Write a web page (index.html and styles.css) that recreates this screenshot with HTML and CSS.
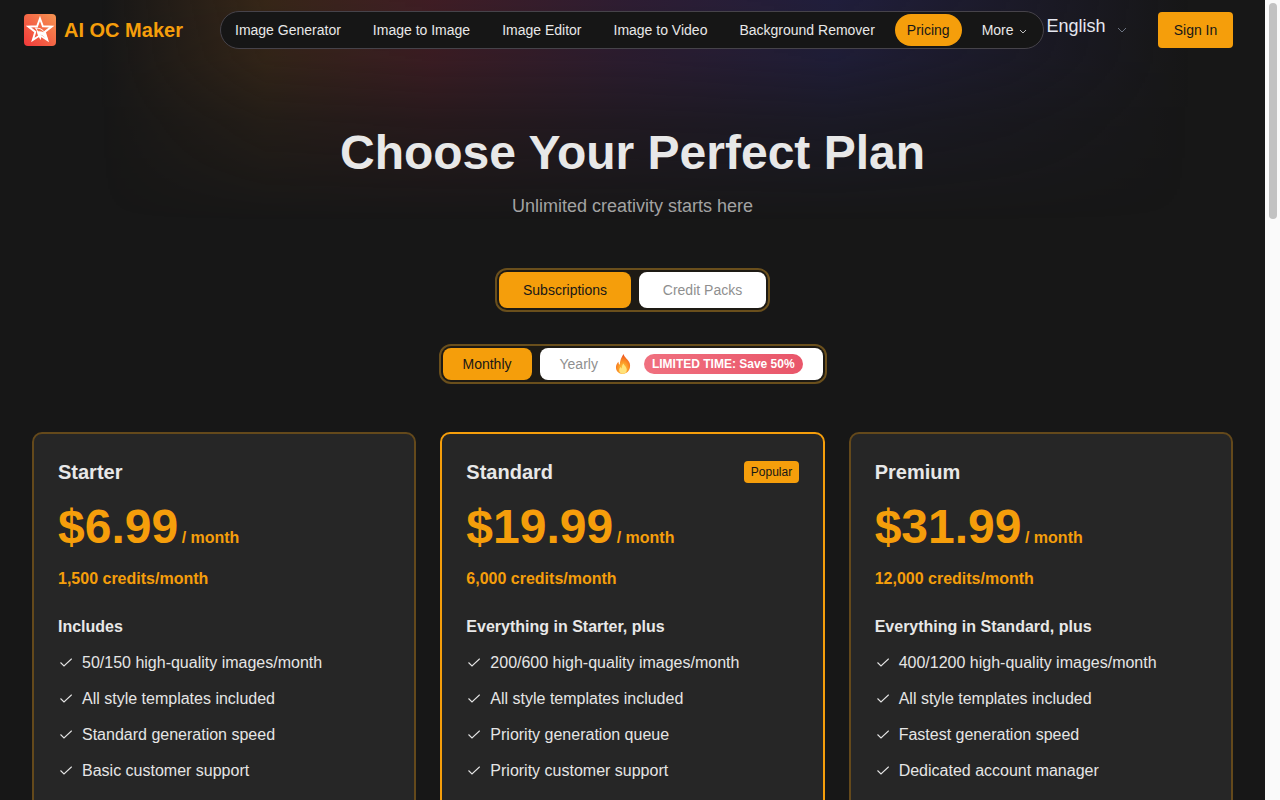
FILE: index.html
```html
<!DOCTYPE html>
<html lang="en">
<head>
<meta charset="utf-8">
<title>AI OC Maker - Pricing</title>
<link rel="stylesheet" href="styles.css">
</head>
<body>
<div class="scrollbar"><div class="scroll-thumb"></div></div>
<div class="glow"></div>
<header class="header">
  <a class="brand" href="#">
    <svg class="logo" viewBox="0 0 32 32" aria-hidden="true">
      <defs>
        <linearGradient id="lg" x1="0" y1="1" x2="1" y2="0"><stop offset="0" stop-color="#f2383a"/><stop offset="1" stop-color="#f59552"/></linearGradient>
        <radialGradient id="fg" cx=".5" cy=".75" r=".8"><stop offset="0" stop-color="#ffd23f"/><stop offset=".5" stop-color="#fb8f24"/><stop offset="1" stop-color="#e8401f"/></radialGradient>
      </defs>
      <rect width="32" height="32" rx="4" fill="url(#lg)"/>
      <path d="M16 4.500l2.900 7.800 8.800.3-6.900 5.300 2.500 8.200-7.300-4.800-7.200 4.800 2.500-8.200-6.900-5.300 8.700-.3z" fill="none" stroke="#fff" stroke-width="1.900" stroke-linejoin="miter"/>
      <path d="M10.500 13.500c4.500-.5 9 1.500 11 6l3 7c-3-2.500-5.500-5-8-6 1 2 1 3.500 0 5.500-2-3.500-3.500-6-3.500-8 0-1.500-1-3-2.500-4.500z" fill="#fff"/>
      <path d="M12.500 14.500c3 .2 6 1.500 7.500 3.800-2.500-1-4.500-1.300-6-1z" fill="#f4704a"/>
    </svg>
    <span class="brand-name">AI OC Maker</span>
  </a>
  <nav class="nav">
    <a class="nav-item" href="#">Image Generator</a>
    <a class="nav-item" href="#">Image to Image</a>
    <a class="nav-item" href="#">Image Editor</a>
    <a class="nav-item" href="#">Image to Video</a>
    <a class="nav-item" href="#">Background Remover</a>
    <a class="nav-item active" href="#">Pricing</a>
    <a class="nav-item" href="#">More <svg class="chev-sm" viewBox="0 0 8 5"><path d="M1 1l3 3 3-3" fill="none" stroke="currentColor" stroke-width=".8"/></svg></a>
  </nav>
  <div class="lang"><span>English</span><svg class="chev-lg" viewBox="0 0 10 6"><path d="M1 1l4 4 4-4" fill="none" stroke="#6b7280" stroke-width="1"/></svg></div>
  <button class="signin">Sign In</button>
</header>
<main class="main">
  <h1 class="title">Choose Your Perfect Plan</h1>
  <p class="subtitle">Unlimited creativity starts here</p>
  <div class="switch-row first">
    <div class="switch">
      <button class="tab tab-lg on sub">Subscriptions</button>
      <button class="tab tab-lg packs">Credit Packs</button>
    </div>
  </div>
  <div class="switch-row">
    <div class="switch">
      <button class="tab on monthly">Monthly</button>
      <button class="tab yearly"><span>Yearly</span>
        <svg class="fire" viewBox="0 0 16 20" aria-hidden="true">
          <path d="M8.500 0c.5 3 5 5.500 6.300 9.500 1.200 4.500-1.300 10-6.800 10.500C2.500 20 .2 15.500 1.200 11.500c.4-1.500 1.300-3 2.300-3.800 0 1.500.4 2.500 1.300 3C4.800 7 6.500 3 8.500 0z" fill="url(#fg)"/>
          <path d="M8.500 9.500c.5 2 3.300 3.500 3.300 6.300 0 2.500-1.700 4-3.800 4s-3.800-1.500-3.800-3.600c0-1.500.8-2.500 1.500-3.200.2.700.6 1.200 1.200 1.400C6.800 12.500 7.200 10.800 8.500 9.500z" fill="#ffe27a"/>
        </svg>
        <span class="save">LIMITED TIME: Save 50%</span>
      </button>
    </div>
  </div>
  <section class="plans">
    <article class="plan">
      <div class="plan-head"><h2 class="plan-name">Starter</h2></div>
      <div class="price"><span class="amount">$6.99</span><span class="per">/ month</span></div>
      <div class="credits">1,500 credits/month</div>
      <h3 class="inc">Includes</h3>
      <ul class="features">
        <li><svg class="tick" viewBox="0 0 12 9"><path d="M.5 4.500l3.500 3.500L11.700.7" fill="none" stroke="currentColor" stroke-width="1.100"/></svg>50/150 high-quality images/month</li>
        <li><svg class="tick" viewBox="0 0 12 9"><path d="M.5 4.500l3.500 3.500L11.700.7" fill="none" stroke="currentColor" stroke-width="1.100"/></svg>All style templates included</li>
        <li><svg class="tick" viewBox="0 0 12 9"><path d="M.5 4.500l3.500 3.500L11.700.7" fill="none" stroke="currentColor" stroke-width="1.100"/></svg>Standard generation speed</li>
        <li><svg class="tick" viewBox="0 0 12 9"><path d="M.5 4.500l3.500 3.500L11.700.7" fill="none" stroke="currentColor" stroke-width="1.100"/></svg>Basic customer support</li>
        <li><svg class="tick" viewBox="0 0 12 9"><path d="M.5 4.500l3.500 3.500L11.700.7" fill="none" stroke="currentColor" stroke-width="1.100"/></svg>AI editing tools</li>
      </ul>
    </article>
    <article class="plan popular">
      <div class="plan-head"><h2 class="plan-name">Standard</h2><span class="badge">Popular</span></div>
      <div class="price"><span class="amount">$19.99</span><span class="per">/ month</span></div>
      <div class="credits">6,000 credits/month</div>
      <h3 class="inc">Everything in Starter, plus</h3>
      <ul class="features">
        <li><svg class="tick" viewBox="0 0 12 9"><path d="M.5 4.500l3.500 3.500L11.700.7" fill="none" stroke="currentColor" stroke-width="1.100"/></svg>200/600 high-quality images/month</li>
        <li><svg class="tick" viewBox="0 0 12 9"><path d="M.5 4.500l3.500 3.500L11.700.7" fill="none" stroke="currentColor" stroke-width="1.100"/></svg>All style templates included</li>
        <li><svg class="tick" viewBox="0 0 12 9"><path d="M.5 4.500l3.500 3.500L11.700.7" fill="none" stroke="currentColor" stroke-width="1.100"/></svg>Priority generation queue</li>
        <li><svg class="tick" viewBox="0 0 12 9"><path d="M.5 4.500l3.500 3.500L11.700.7" fill="none" stroke="currentColor" stroke-width="1.100"/></svg>Priority customer support</li>
        <li><svg class="tick" viewBox="0 0 12 9"><path d="M.5 4.500l3.500 3.500L11.700.7" fill="none" stroke="currentColor" stroke-width="1.100"/></svg>AI editing tools</li>
      </ul>
    </article>
    <article class="plan">
      <div class="plan-head"><h2 class="plan-name">Premium</h2></div>
      <div class="price"><span class="amount">$31.99</span><span class="per">/ month</span></div>
      <div class="credits">12,000 credits/month</div>
      <h3 class="inc">Everything in Standard, plus</h3>
      <ul class="features">
        <li><svg class="tick" viewBox="0 0 12 9"><path d="M.5 4.500l3.500 3.500L11.700.7" fill="none" stroke="currentColor" stroke-width="1.100"/></svg>400/1200 high-quality images/month</li>
        <li><svg class="tick" viewBox="0 0 12 9"><path d="M.5 4.500l3.500 3.500L11.700.7" fill="none" stroke="currentColor" stroke-width="1.100"/></svg>All style templates included</li>
        <li><svg class="tick" viewBox="0 0 12 9"><path d="M.5 4.500l3.500 3.500L11.700.7" fill="none" stroke="currentColor" stroke-width="1.100"/></svg>Fastest generation speed</li>
        <li><svg class="tick" viewBox="0 0 12 9"><path d="M.5 4.500l3.500 3.500L11.700.7" fill="none" stroke="currentColor" stroke-width="1.100"/></svg>Dedicated account manager</li>
        <li><svg class="tick" viewBox="0 0 12 9"><path d="M.5 4.500l3.500 3.500L11.700.7" fill="none" stroke="currentColor" stroke-width="1.100"/></svg>AI editing tools</li>
      </ul>
    </article>
  </section>
</main>
</body>
</html>
```
FILE: styles.css
```css
* { box-sizing: border-box; }
html { background: #171717; }
body {
  margin: 0;
  padding-right: 15px;
  position: relative;
  background: #171717;
  color: #e8e8e8;
  font-family: "Liberation Sans", Arial, sans-serif;
}
.scrollbar {
  position: fixed;
  top: 0; right: 0; bottom: 0;
  width: 15px;
  z-index: 5;
  background: #fafafa;
}
.scroll-thumb {
  position: absolute;
  top: 3px; left: 4px;
  width: 8px;
  height: 216px;
  border-radius: 4px;
  background: #c2c2c2;
}
.glow {
  position: absolute;
  top: 0; left: 0; right: 15px;
  height: 220px;
  pointer-events: none;
  background: linear-gradient(to right,
    rgba(60, 40, 20, 0) 8%,
    rgba(120, 70, 25, .32) 21%,
    rgba(135, 40, 60, .36) 34%,
    rgba(85, 40, 100, .36) 50%,
    rgba(45, 40, 110, .42) 66%,
    rgba(40, 35, 90, .26) 80%,
    rgba(30, 30, 60, 0) 94%);
  -webkit-mask-image: linear-gradient(to bottom, #000 0, rgba(0, 0, 0, .85) 60px, rgba(0, 0, 0, .4) 120px, transparent 220px);
  mask-image: linear-gradient(to bottom, #000 0, rgba(0, 0, 0, .85) 60px, rgba(0, 0, 0, .4) 120px, transparent 220px);
}
.header {
  position: relative;
  display: flex;
  align-items: center;
  height: 60px;
  padding: 0 32px 0 24px;
}
.brand { display: flex; align-items: center; gap: 8px; text-decoration: none; width: 196px; flex: none; }
.logo { width: 32px; height: 32px; flex: none; }
.brand-name { color: #f59e0b; font-size: 20px; font-weight: 700; white-space: nowrap; }
.nav {
  display: flex;
  align-items: center;
  gap: 8px;
  height: 38px;
  padding: 2px;
  border: 1px solid #46434a;
  border-radius: 19px;
  background: #161616;
  flex: none;
}
.nav-item {
  display: flex;
  align-items: center;
  gap: 5px;
  height: 32px;
  padding: 0 12px;
  border-radius: 16px;
  color: #e8e8e8;
  font-size: 14px;
  text-decoration: none;
  white-space: nowrap;
}
.nav-item.active { background: #f59e0b; color: #171717; }
.chev-sm { width: 8px; height: 5px; margin-top: 2px; margin-right: 2px; }
.lang {
  display: flex;
  align-items: center;
  gap: 11px;
  margin-left: 3px;
  margin-top: -8px;
  font-size: 18px;
  color: #e5e7f0;
}
.chev-lg { width: 10px; height: 6px; margin-top: 8px; }
.signin {
  margin-left: auto;
  width: 75px;
  height: 36px;
  border: 0;
  border-radius: 4px;
  background: #f59e0b;
  color: #171717;
  font: 14px "Liberation Sans", Arial, sans-serif;
}
.main { position: relative; padding: 0 32px; }
.title {
  margin: 65px 0 0;
  text-align: center;
  font-size: 48px;
  line-height: 56px;
  font-weight: 700;
  color: #e8e8e8;
}
.subtitle {
  margin: 12px 0 0;
  text-align: center;
  font-size: 18px;
  line-height: 26px;
  color: #a3a3a3;
}
.switch-row { display: flex; justify-content: center; margin-top: 32px; }
.switch-row.first { margin-top: 49px; }
.switch {
  display: flex;
  gap: 8px;
  padding: 2px;
  border: 2px solid #6a4f1c;
  border-radius: 12px;
  background: #1d1a14;
}
.tab {
  display: flex;
  align-items: center;
  justify-content: center;
  height: 32px;
  border: 0;
  border-radius: 8px;
  background: #fff;
  color: #8f8f8f;
  font: 14px "Liberation Sans", Arial, sans-serif;
}
.tab-lg { height: 36px; }
.tab.on { background: #f59e0b; color: #171717; }
.sub { width: 132px; }
.packs { width: 127px; }
.monthly { width: 89px; }
.yearly { width: 283px; justify-content: flex-start; padding-left: 20px; }
.fire { width: 16px; height: 20px; margin-left: 17px; }
.save {
  margin-left: 13px;
  padding: 0 8px;
  height: 20px;
  line-height: 20px;
  border-radius: 10px;
  background: linear-gradient(to right, #f0707f, #e9566a);
  color: #fff;
  font-size: 12px;
  font-weight: 700;
  white-space: nowrap;
}
.plans {
  display: grid;
  grid-template-columns: repeat(3, 1fr);
  gap: 24px;
  margin-top: 48px;
  align-items: start;
}
.plan {
  padding: 23px 24px;
  height: 520px;
  border: 2px solid #64491b;
  border-radius: 10px;
  background: #262626;
}
.plan.popular { border-color: #f59e0b; }
.plan-head { display: flex; align-items: center; justify-content: space-between; height: 30px; }
.plan-name { margin: 0; font-size: 20px; font-weight: 700; color: #e8e8e8; }
.badge {
  height: 22px;
  line-height: 22px;
  padding: 0 6.500px;
  border-radius: 4px;
  background: #f59e0b;
  color: #171717;
  font-size: 12px;
}
.price { display: flex; align-items: baseline; gap: 3.500px; margin-top: 12px; line-height: 56px; color: #f59e0b; }
.amount { font-size: 48px; font-weight: 700; }
.per { font-size: 16px; font-weight: 700; }
.credits { margin-top: 1px; font-size: 16px; line-height: 24px; font-weight: 700; color: #f59e0b; }
.inc { margin: 24px 0 0; font-size: 16px; line-height: 24px; font-weight: 700; color: #e8e8e8; }
.features { list-style: none; margin: 6px 0 0; padding: 0; }
.features li {
  display: flex;
  align-items: center;
  gap: 10px;
  height: 36px;
  font-size: 16px;
  color: #e5e5e5;
}
.tick { width: 12px; height: 9px; margin: 0 0 2px 2px; flex: none; }
```
